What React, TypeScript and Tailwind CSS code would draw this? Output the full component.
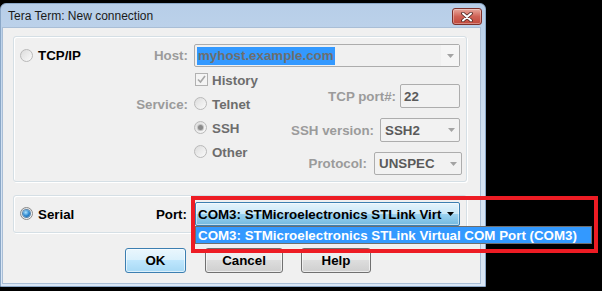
import React from "react";

function Arrow({ color }: { color: string }) {
  return (
    <svg width="7" height="4" viewBox="0 0 7 4">
      <path d="M0 0H7L3.5 4Z" fill={color} />
    </svg>
  );
}

function Radio({ state }: { state: "off" | "grayOn" | "blueOn" }) {
  return (
    <div
      className={
        "w-[13px] h-[13px] rounded-full border flex items-center justify-center shrink-0 " +
        (state === "blueOn"
          ? "border-[#8a8a8a] bg-gradient-to-br from-[#d9d9d9] to-[#fafafa]"
          : "border-[#b9b9b9] bg-gradient-to-br from-[#dcdcdc] to-[#fbfbfb]")
      }
    >
      {state === "grayOn" && (
        <div className="w-[5px] h-[5px] rounded-full bg-[#8a8a8a] shadow-[0_0_0_1px_#c4c4c4]" />
      )}
      {state === "blueOn" && (
        <div className="w-[7px] h-[7px] rounded-full bg-[radial-gradient(circle_at_40%_35%,#aee3ff_0%,#2a86cf_55%,#0c4f8f_100%)] shadow-[0_0_0_1px_#5b87ad]" />
      )}
    </div>
  );
}

function Checkbox() {
  return (
    <div className="w-[13px] h-[13px] border border-[#b1b1b1] bg-[#f4f4f4] flex items-center justify-center shrink-0">
      <svg width="9" height="9" viewBox="0 0 9 9">
        <path d="M1 4.5L3.5 7L8 1" fill="none" stroke="#a6a6a6" strokeWidth="1.6" />
      </svg>
    </div>
  );
}

function DisabledCombo({ value, w, h }: { value: string; w: string; h: string }) {
  return (
    <div
      className={
        "flex items-center rounded-[2px] border border-[#adadad] bg-[#f2f2f2] text-[#5a5a5a] " + w + " " + h
      }
    >
      <span className="pl-[4px] pt-[1px] flex-1">{value}</span>
      <div className="w-[16px] flex justify-center">
        <Arrow color="#a3a3a3" />
      </div>
    </div>
  );
}

export default function App() {
  return (
    <div className="relative w-[602px] h-[291px] bg-black overflow-hidden font-['Liberation_Sans',Arial,sans-serif] text-[13.33px] font-bold leading-none">
      <div className="mt-[3px] w-[486px] h-[284px] rounded-t-[6px] border border-[#8aa7c7] bg-gradient-to-b from-[#b7cee8] via-[#d2e1f2] to-[#d9e6f5] flex flex-col">
        {/* Title bar */}
        <div className="h-[23px] flex pl-[7px] pr-[3px]">
          <span className="self-center pt-[1px] font-normal text-[12px] text-[#1a1a1a]">Tera Term: New connection</span>
          <div className="ml-auto mt-[4px] w-[30px] h-[17px] rounded-[3px] border border-[#7d302a] bg-gradient-to-b from-[#e7a79d] via-[#cf6256] to-[#c0473b] shadow-[inset_0_0_0_1px_rgba(255,255,255,0.35)] flex items-center justify-center">
            <svg width="12" height="10" viewBox="0 0 12 10">
              <path d="M2 1.5L10 8.5M10 1.5L2 8.5" stroke="#4a2420" strokeWidth="3.6" strokeLinecap="round" />
              <path d="M2 1.5L10 8.5M10 1.5L2 8.5" stroke="#ffffff" strokeWidth="2" strokeLinecap="round" />
            </svg>
          </div>
        </div>

        {/* Client area */}
        <div className="flex-1 ml-[1px] mr-[4px] mb-[2px] bg-[#f0f0f0] border border-[#a9bed6] flex flex-col pl-[10px]">
          {/* TCP/IP group */}
          <div className="mt-[8px] w-[454px] h-[146px] rounded-[3px] border border-[#d5dfe5] shadow-[inset_1px_1px_0_#fff,1px_1px_0_#fff] flex flex-col">
            <div className="mt-[7px] h-[23px] flex items-center">
              <div className="w-[174px] flex items-center justify-between">
                <div className="flex items-center pl-[6px] gap-[5px]">
                  <Radio state="off" />
                  <span className="text-black pt-[1px]">TCP/IP</span>
                </div>
                <span className="text-[#9b9b9b] pt-[1px]">Host:</span>
              </div>
              <div className="ml-[6px] w-[266px] h-[23px] flex items-center rounded-[2px] border border-[#acacac] bg-[#f0f0f0]">
                <div className="flex-1 pl-[2px]">
                  <span className="inline-flex items-center h-[18px] bg-[#3399ff] text-[#6e6e6e] px-[1px] pt-[1px]">myhost.example.com</span>
                </div>
                <div className="w-[18px] h-full flex items-center justify-center bg-[#f5f5f5]">
                  <Arrow color="#a3a3a3" />
                </div>
              </div>
            </div>

            <div className="mt-[3px] flex">
              {/* Left column */}
              <div className="flex flex-col">
                <div className="h-[20px] flex items-center">
                  <div className="w-[174px]" />
                  <div className="ml-[7px] flex items-center gap-[4px]">
                    <Checkbox />
                    <span className="text-[#6d6d6d] pt-[1px]">History</span>
                  </div>
                </div>
                <div className="mt-[2px] flex flex-col">
                  <div className="h-[24px] flex items-center">
                    <span className="w-[174px] text-right text-[#9b9b9b] pt-[1px]">Service:</span>
                    <div className="ml-[6px] flex items-center gap-[5px]">
                      <Radio state="off" />
                      <span className="text-[#6d6d6d] pt-[1px]">Telnet</span>
                    </div>
                  </div>
                  <div className="h-[24px] flex items-center">
                    <span className="w-[174px]" />
                    <div className="ml-[6px] flex items-center gap-[5px]">
                      <Radio state="grayOn" />
                      <span className="text-[#6d6d6d] pt-[1px]">SSH</span>
                    </div>
                  </div>
                  <div className="h-[24px] flex items-center">
                    <span className="w-[174px]" />
                    <div className="ml-[6px] flex items-center gap-[5px]">
                      <Radio state="off" />
                      <span className="text-[#6d6d6d] pt-[1px]">Other</span>
                    </div>
                  </div>
                </div>
              </div>

              {/* Right column */}
              <div className="ml-auto pr-[6px] mt-[14px] flex flex-col items-end gap-[10px]">
                <div className="flex items-center">
                  <span className="text-[#9b9b9b] pt-[1px]">TCP port#:</span>
                  <div className="ml-[4px] w-[60px] h-[24px] rounded-[2px] border border-[#adadad] bg-[#f2f2f2] flex items-center pl-[3px] pt-[1px] text-[#5a5a5a]">
                    22
                  </div>
                </div>
                <div className="flex items-center">
                  <span className="text-[#9b9b9b] pt-[1px]">SSH version:</span>
                  <div className="ml-[6px]">
                    <DisabledCombo value="SSH2" w="w-[80px]" h="h-[24px]" />
                  </div>
                </div>
                <div className="flex items-center -mr-[2px]">
                  <span className="text-[#9b9b9b] pt-[1px]">Protocol:</span>
                  <div className="ml-[7px]">
                    <DisabledCombo value="UNSPEC" w="w-[88px]" h="h-[23px]" />
                  </div>
                </div>
              </div>
            </div>
          </div>

          {/* Serial group */}
          <div className="mt-[13px] w-[454px] h-[38px] rounded-[3px] border border-[#d5dfe5] shadow-[inset_1px_1px_0_#fff,1px_1px_0_#fff]">
            <div className="mt-[6px] h-[24px] flex items-center">
              <div className="w-[173px] flex items-center justify-between">
                <div className="flex items-center pl-[6px] gap-[5px]">
                  <Radio state="blueOn" />
                  <span className="text-black pt-[1px]">Serial</span>
                </div>
                <span className="text-black pt-[1px]">Port:</span>
              </div>
              <div className="ml-[8px] w-[265px] h-[24px] flex items-center rounded-[2px] border border-[#3c7fb1] bg-[linear-gradient(#e5f4fc_0%,#c9e8f8_50%,#9dd3f0_50%,#72b9e0_100%)] shadow-[inset_0_0_0_1px_rgba(255,255,255,0.5)]">
                <div className="flex-1 whitespace-nowrap pl-[2px] pt-[1px] text-black">
                  COM3: STMicroelectronics STLink Virt
                </div>
                <div className="w-[17px] flex justify-center">
                  <Arrow color="#000000" />
                </div>
              </div>
            </div>
          </div>

          {/* Buttons */}
          <div className="mt-[15px] ml-[112px] flex text-black">
            <div className="w-[61px] h-[25px] pt-[1px] rounded-[3px] border border-[#3c7fb1] bg-[linear-gradient(#eaf6fd_0%,#d9f0fc_50%,#bee6fd_50%,#a7d9f5_100%)] shadow-[inset_0_0_0_1px_rgba(255,255,255,0.6)] flex items-center justify-center">
              OK
            </div>
            <div className="ml-[19px] w-[78px] h-[25px] pt-[1px] rounded-[3px] border border-[#707070] bg-[linear-gradient(#f2f2f2_0%,#ebebeb_50%,#dddddd_50%,#cfcfcf_100%)] shadow-[inset_0_0_0_1px_rgba(255,255,255,0.6)] flex items-center justify-center">
              Cancel
            </div>
            <div className="ml-[18px] w-[70px] h-[25px] pt-[1px] rounded-[3px] border border-[#707070] bg-[linear-gradient(#f2f2f2_0%,#ebebeb_50%,#dddddd_50%,#cfcfcf_100%)] shadow-[inset_0_0_0_1px_rgba(255,255,255,0.6)] flex items-center justify-center">
              Help
            </div>
          </div>
        </div>
      </div>

      {/* Open dropdown list */}
      <div className="absolute left-[195px] top-[226px] w-[397px] h-[18px] border border-[#6e6e6e] bg-[#3399ff] text-white flex items-center pl-[2px] pt-[1px] whitespace-nowrap">
        COM3: STMicroelectronics STLink Virtual COM Port (COM3)
      </div>

      {/* Red highlight rectangle */}
      <div className="absolute left-[191px] top-[196px] w-[407px] h-[57px] border-[4px] border-[#ed1c24]" />
    </div>
  );
}
